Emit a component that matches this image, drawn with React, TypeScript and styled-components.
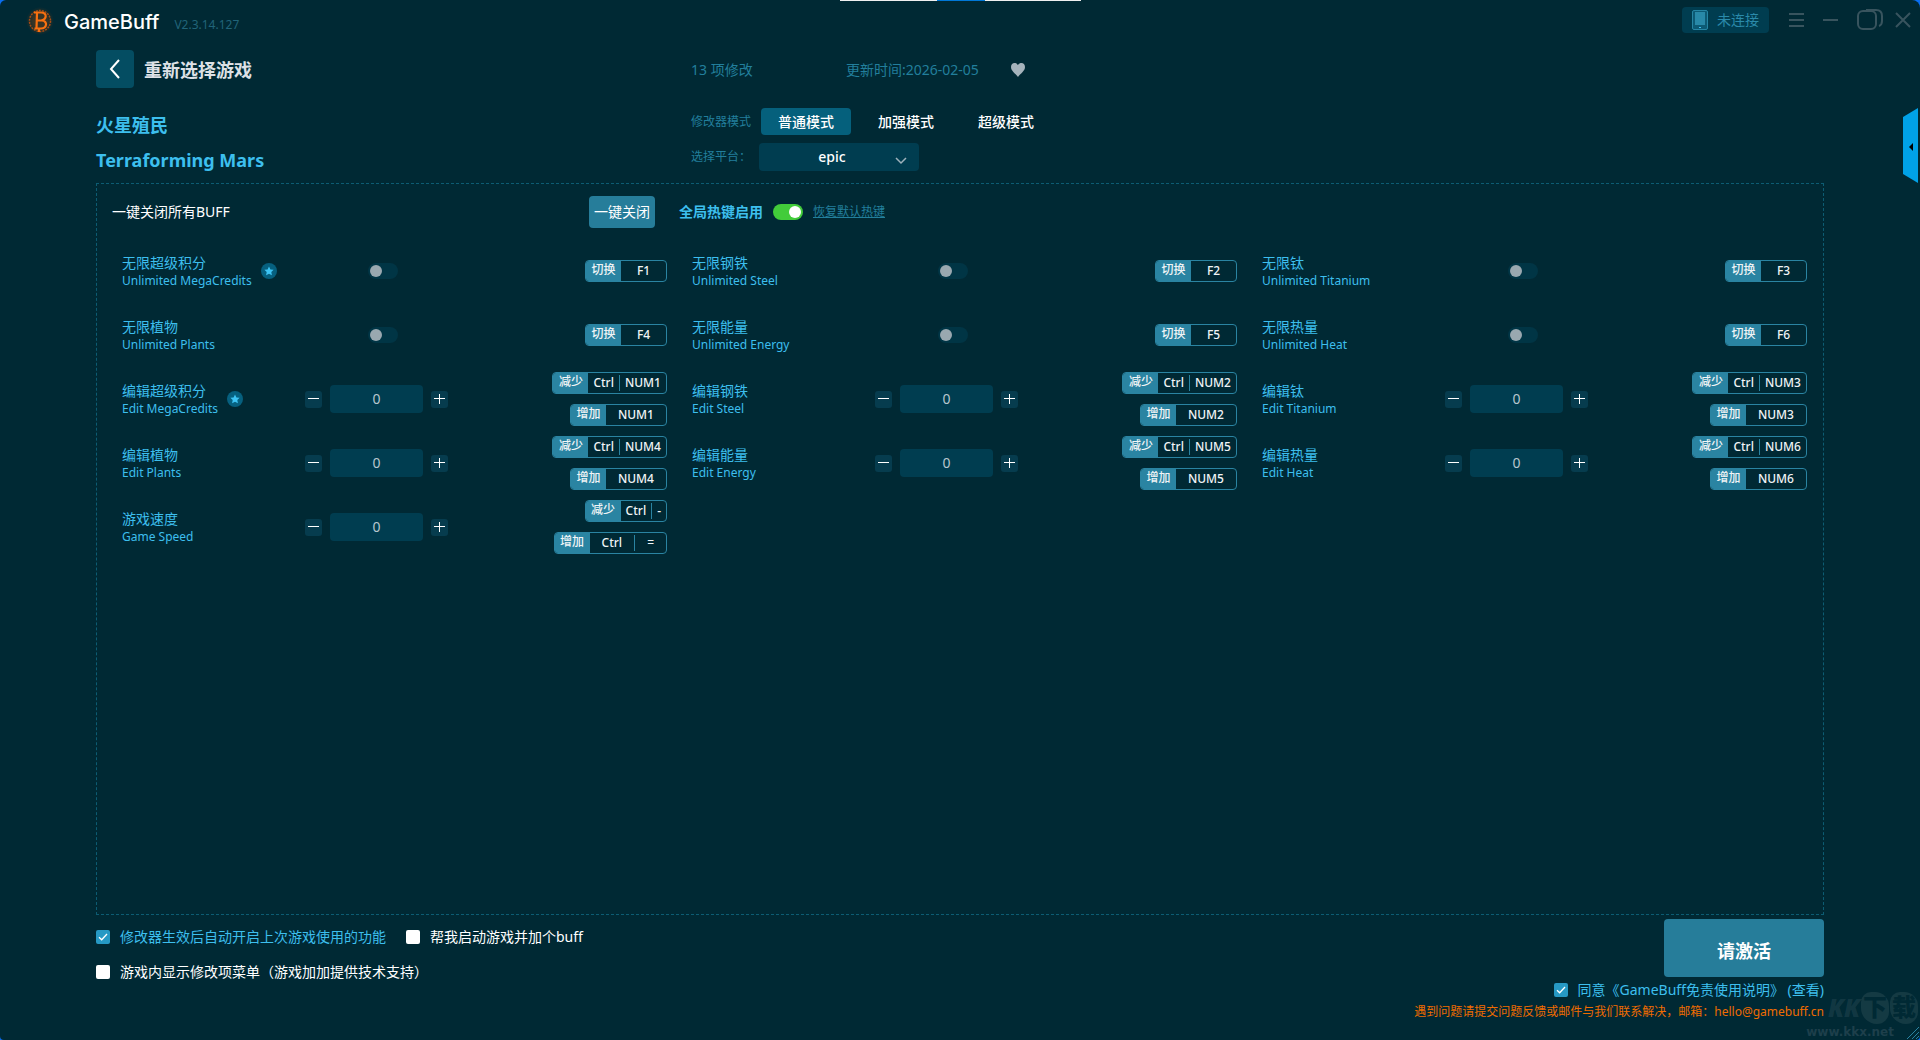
import React, { useState } from "react";
import styled, { createGlobalStyle } from "styled-components";

const GlobalStyle = createGlobalStyle`
  * { box-sizing: border-box; }
  html, body, #root { height: 100%; margin: 0; }
  body { background: #0a6ef0; overflow: hidden; }
  body, button, input, select, output {
    font-family: "Noto Sans", "Noto Sans CJK SC", sans-serif;
  }
  button { border: 0; padding: 0; background: none; cursor: pointer; }
`;

const Window = styled.div`
  position: relative;
  display: flex;
  flex-direction: column;
  height: 100vh;
  background: #002934;
  border-radius: 6px 8px 4px 4px;
  overflow: hidden;
`;

const TopStrip = styled.div`
  position: absolute;
  top: 0;
  left: 50%;
  display: flex;
  width: 241px;
  height: 1px;
  margin-left: -120px;
  background: #f0f0f0;
`;

const StripMark = styled.span`
  width: 48px;
  margin: 0 auto;
  background: #0078d7;
`;

const TitleBar = styled.header`
  display: flex;
  align-items: center;
  height: 40px;
  padding: 0 9px 0 26px;
`;

const Brand = styled.div`
  margin-left: 10px;
  padding-top: 3px;
  color: #ffffff;
  font: 500 20px/28px Inter, sans-serif;
`;

const Version = styled.div`
  margin-left: 15px;
  padding-top: 9px;
  color: #216479;
  font-size: 12px;
  line-height: 16px;
`;

const WindowTools = styled.div`
  display: flex;
  align-items: center;
  gap: 12px;
  margin-left: auto;
`;

const ConnectButton = styled.button`
  display: flex;
  align-items: center;
  gap: 9px;
  height: 26px;
  margin-right: 8px;
  padding: 0 10px;
  border-radius: 4px;
  background: #003d50;
  color: #2a8aaa;
  font-size: 14px;
  line-height: 20px;
`;

const WindowButton = styled.button<{ $spaced?: boolean }>`
  display: flex;
  margin-right: ${(p) => (p.$spaced ? 7 : 0)}px;
  color: #38545e;
`;

const Main = styled.main`
  display: flex;
  flex: 1;
  flex-direction: column;
  min-height: 0;
  padding: 0 96px;
`;

const Heading = styled.section`
  display: grid;
  grid-template-columns: 595px 1fr;
  height: 143px;
`;

const Stack = styled.div`
  display: flex;
  flex-direction: column;
`;

const BackRow = styled.div`
  display: flex;
  align-items: center;
  gap: 10px;
  height: 38px;
  margin: 10px 0 20px;
`;

const BackButton = styled.button`
  display: grid;
  place-items: center;
  width: 38px;
  height: 38px;
  border-radius: 4px;
  background: #044d62;
  color: #ffffff;
`;

const PageTitle = styled.h1`
  margin: 0;
  padding-top: 2px;
  color: #dde1e6;
  font-size: 18px;
  line-height: 28px;
`;

const GameName = styled.h2`
  margin: 0;
  color: #3dbfee;
  font-size: 18px;
  line-height: 35px;
`;

const InfoRow = styled.div`
  display: flex;
  align-items: center;
  height: 38px;
  margin: 10px 0 20px;
  padding-top: 2px;
  color: #227f9c;
  font-size: 14px;
  line-height: 20px;
`;

const ChangeCount = styled.span`
  width: 155px;
`;

const LikeButton = styled.button`
  display: flex;
  margin-left: 31px;
`;

const ModeRow = styled.div`
  display: flex;
  align-items: center;
  gap: 10px;
  height: 27px;
  margin-bottom: 8px;
`;

const FieldLabel = styled.label`
  width: 60px;
  color: #227f9c;
  font-size: 12px;
  line-height: 18px;
`;

const Mode = styled.button<{ $active: boolean }>`
  width: 90px;
  height: 27px;
  border-radius: 4px;
  background: ${(p) => (p.$active ? "#05607c" : "transparent")};
  color: #ffffff;
  font-size: 14px;
  font-weight: 500;
  line-height: 20px;
`;

const PlatformRow = styled.div`
  display: flex;
  align-items: center;
  gap: 8px;
`;

const SelectBox = styled.div`
  position: relative;
  display: flex;
`;

const Select = styled.select`
  width: 160px;
  height: 28px;
  padding: 0 28px 2px 14px;
  border: 0;
  border-radius: 4px;
  appearance: none;
  background: #003d50;
  color: #ffffff;
  font-size: 14px;
  font-weight: 500;
  text-align: center;
  text-align-last: center;
`;

const SelectArrow = styled.svg`
  position: absolute;
  top: 14px;
  right: 12px;
  pointer-events: none;
`;

const Panel = styled.section`
  display: flex;
  flex: 1;
  flex-direction: column;
  padding: 12px 16px 0 15px;
  border: 1px dashed #0c5c73;
`;

const PanelBar = styled.div`
  display: flex;
  align-items: center;
  height: 32px;
  margin-bottom: 11px;
  font-size: 14px;
  line-height: 20px;
`;

const BarTitle = styled.span`
  width: 477px;
  color: #ffffff;
`;

const CloseAll = styled.button`
  width: 66px;
  height: 32px;
  margin-right: 24px;
  border-radius: 4px;
  background: #267d9a;
  color: #ffffff;
  font-size: 14px;
  line-height: 20px;
`;

const HotkeyLabel = styled.label`
  margin-right: 10px;
  color: #3dbfee;
  font-weight: 700;
`;

const Switch = styled.input`
  display: flex;
  align-items: center;
  width: 30px;
  height: 16px;
  margin: 0;
  padding: 0 2px;
  border-radius: 8px;
  appearance: none;
  background: #003545;
  cursor: pointer;

  &::before {
    content: "";
    width: 12px;
    height: 12px;
    border-radius: 50%;
    background: #99a8b0;
  }
  &:checked {
    justify-content: flex-end;
    background: #42cc3a;
  }
  &:checked::before { background: #ffffff; }
`;

const ResetLink = styled.a`
  margin-left: 10px;
  color: #227f9c;
  font-size: 12px;
  line-height: 18px;
`;

const Grid = styled.div`
  display: grid;
  grid-template-columns: repeat(3, 1fr);
  column-gap: 25px;
  padding-left: 10px;
`;

const Item = styled.div`
  display: grid;
  grid-template-columns: 183px 156px 1fr;
  align-items: center;
  height: 64px;
`;

const NameCell = styled.div`
  display: flex;
  align-items: center;
  gap: 9px;
`;

const Name = styled.div`
  padding-top: 2px;
  color: #3dbfee;
  font-size: 14px;
  line-height: 18px;
  white-space: nowrap;
`;

const EnglishName = styled.div`
  font-size: 12px;
`;

const SwitchCell = styled.div`
  display: flex;
  justify-content: center;
`;

const Stepper = styled.div`
  display: flex;
  align-items: center;
  gap: 8px;
`;

const StepButton = styled.button`
  display: grid;
  place-items: center;
  width: 17px;
  height: 17px;
  border-radius: 3px;
  background: #063c4e;
  color: #ffffff;
`;

const Value = styled.input`
  width: 93px;
  height: 28px;
  padding: 0 0 1px;
  border: 0;
  border-radius: 4px;
  background: #003d50;
  color: #b8c6ce;
  font-size: 14px;
  text-align: center;
`;

const HotkeyCell = styled.div`
  display: flex;
  flex-direction: column;
  align-items: flex-end;
  gap: 10px;
`;

const Hotkey = styled.button`
  display: flex;
  height: 22px;
  border: 1px solid #2a84a2;
  border-radius: 4px;
  overflow: hidden;
  color: #f0f4f6;
  font-size: 12px;
  font-weight: 500;
  line-height: 20px;
`;

const Action = styled.span`
  width: 35px;
  background: #2a84a2;
  line-height: 18px;
`;

const Keys = styled.span<{ $tight: boolean }>`
  display: flex;
  align-items: center;
  min-width: 45px;

  & > span {
    flex: 1 0 auto;
    padding: 0 ${(p) => (p.$tight ? 5 : 12)}px;
    line-height: 16px;
  }
  & > span + span { border-left: 1px solid #2a84a2; }
`;

const Footer = styled.footer`
  display: flex;
  justify-content: space-between;
  height: 125px;
`;

const Options = styled.div`
  display: flex;
  flex-direction: column;
  gap: 15px;
  padding-top: 12px;
`;

const OptionRow = styled.div`
  display: flex;
  gap: 20px;
`;

const Option = styled.label<{ $on: boolean }>`
  display: flex;
  align-items: center;
  gap: 10px;
  color: ${(p) => (p.$on ? "#3dbfee" : "#ffffff")};
  font-size: 14px;
  line-height: 20px;
  white-space: nowrap;
`;

const TickBox = styled.span`
  position: relative;
  display: flex;

  & > input {
    width: 14px;
    height: 14px;
    margin: 0;
    border-radius: 2px;
    appearance: none;
    background: #ffffff;
  }
  & > input:checked { background: #2699c4; }
  & > svg { position: absolute; inset: 0; pointer-events: none; }
`;

const Activation = styled.div`
  display: flex;
  flex-direction: column;
  align-items: flex-end;
  padding-top: 4px;
`;

const ActivateButton = styled.button`
  width: 160px;
  height: 58px;
  margin-bottom: 3px;
  padding-top: 4px;
  border-radius: 4px;
  background: #267d9a;
  color: #ffffff;
  font-size: 18px;
  font-weight: 700;
`;

const Contact = styled.p`
  margin: 3px 0 0;
  color: #f06c00;
  font-size: 12px;
  line-height: 18px;
`;

const SideTab = styled.button`
  position: absolute;
  top: 108px;
  right: 2px;
  display: flex;
`;

const Watermark = styled.div`
  position: absolute;
  right: 2px;
  bottom: 0;
  display: flex;
  flex-direction: column;
  align-items: flex-end;
  pointer-events: none;
`;

const MarkTitle = styled.div`
  display: flex;
  color: rgba(140, 160, 165, 0.14);
  font: italic 900 24px/32px "Noto Sans", "Noto Sans CJK SC", sans-serif;
`;

const MarkSeal = styled.span`
  width: 28px;
  height: 32px;
  margin-left: 1px;
  border-radius: 10px 14px 12px 16px;
  background: rgba(140, 160, 165, 0.14);
  color: #002934;
  font-size: 24px;
  font-style: normal;
  line-height: 30px;
  text-align: center;
`;

const MarkSite = styled.div`
  padding-right: 24px;
  color: #1d3f4b;
  font: 700 12px/16px "DejaVu Sans", sans-serif;
`;

const Grip = styled.svg`
  position: absolute;
  right: 0;
  bottom: 0;
`;

type Binding = { action: string; keys: string[]; tight?: boolean };
type Feature = {
  name: string;
  english: string;
  star?: boolean;
  edit?: boolean;
  bindings: Binding[];
};

const toggle = (name: string, english: string, key: string, star = false): Feature => ({
  name,
  english,
  star,
  bindings: [{ action: "切换", keys: [key] }],
});

const edit = (name: string, english: string, key: string, star = false): Feature => ({
  name,
  english,
  star,
  edit: true,
  bindings: [
    { action: "减少", keys: ["Ctrl", key], tight: true },
    { action: "增加", keys: [key] },
  ],
});

const features: Feature[] = [
  toggle("无限超级积分", "Unlimited MegaCredits", "F1", true),
  toggle("无限钢铁", "Unlimited Steel", "F2"),
  toggle("无限钛", "Unlimited Titanium", "F3"),
  toggle("无限植物", "Unlimited Plants", "F4"),
  toggle("无限能量", "Unlimited Energy", "F5"),
  toggle("无限热量", "Unlimited Heat", "F6"),
  edit("编辑超级积分", "Edit MegaCredits", "NUM1", true),
  edit("编辑钢铁", "Edit Steel", "NUM2"),
  edit("编辑钛", "Edit Titanium", "NUM3"),
  edit("编辑植物", "Edit Plants", "NUM4"),
  edit("编辑能量", "Edit Energy", "NUM5"),
  edit("编辑热量", "Edit Heat", "NUM6"),
  {
    name: "游戏速度",
    english: "Game Speed",
    edit: true,
    bindings: [
      { action: "减少", keys: ["Ctrl", "-"], tight: true },
      { action: "增加", keys: ["Ctrl", "="] },
    ],
  },
];

const Logo = () => (
  <svg width="28" height="32" viewBox="0 0 28 32" fill="none">
    <defs>
      <radialGradient id="glow">
        <stop offset="0.500" stopColor="#c85000" stopOpacity="0.280" />
        <stop offset="1" stopColor="#c85000" stopOpacity="0" />
      </radialGradient>
    </defs>
    <circle cx="14" cy="17" r="14" fill="url(#glow)" />
    <circle cx="14" cy="17" r="10.500" stroke="#a84c14" strokeWidth="1.500" strokeDasharray="2 1" />
    <path d="M8 8.500h7c6.500 0 6 7 0 8M11 9l-.500 15.500M11 16.500h5c6 .500 5 8-1 8H8.500M13 24.500V28" stroke="#f87010" strokeWidth="2.200" />
  </svg>
);

const Star = () => (
  <svg width="16" height="16" viewBox="0 0 16 16" role="img" aria-label="推荐">
    <circle cx="8" cy="8" r="8" fill="#06607f" />
    <path d="M8 3.500l1.400 2.900 3.200.4-2.300 2.200.6 3.200L8 10.700l-2.900 1.500.6-3.200-2.300-2.200 3.200-.4z" fill="#3dc4f4" />
  </svg>
);

const Tick = ({ label, initial = false }: { label: React.ReactNode; initial?: boolean }) => {
  const [on, setOn] = useState(initial);
  return (
    <Option $on={on}>
      <TickBox>
        <input type="checkbox" checked={on} onChange={() => setOn(!on)} />
        {on && (
          <svg width="14" height="14" fill="none" stroke="#fff" strokeWidth="1.300">
            <path d="M3 7.200l2.700 2.600L11 4" />
          </svg>
        )}
      </TickBox>
      {label}
    </Option>
  );
};

const StepperControl = ({ name }: { name: string }) => {
  const [value, setValue] = useState(0);
  return (
    <Stepper>
      <StepButton aria-label={"减少" + name} onClick={() => setValue(value - 1)}>
        <svg width="11" height="11" stroke="currentColor"><path d="M0 4.500h11" /></svg>
      </StepButton>
      <Value
        aria-label={name}
        value={value}
        onChange={(e) => setValue(Number(e.target.value) || 0)}
      />
      <StepButton aria-label={"增加" + name} onClick={() => setValue(value + 1)}>
        <svg width="11" height="11" stroke="currentColor"><path d="M0 4.500h11M5.500 0v10" /></svg>
      </StepButton>
    </Stepper>
  );
};

export default function App() {
  const [mode, setMode] = useState("普通模式");
  return (
    <>
      <GlobalStyle />
      <Window>
        <TopStrip><StripMark /></TopStrip>
        <TitleBar>
          <Logo />
          <Brand>GameBuff</Brand>
          <Version>V2.3.14.127</Version>
          <WindowTools>
            <ConnectButton>
              <svg width="16" height="20" fill="none">
                <rect x="0.500" y="0.500" width="15" height="19" rx="1.500" fill="#0c5a74" stroke="#2685a3" />
                <rect x="3" y="2" width="10" height="13" fill="#2889a8" />
                <rect x="7" y="17" width="2" height="1" fill="#3dbfee" />
              </svg>
              未连接
            </ConnectButton>
            <WindowButton $spaced aria-label="菜单">
              <svg width="15" height="14" fill="currentColor"><path d="M0 0h15v2H0zM0 6h15v2H0zM0 12h15v2H0z" /></svg>
            </WindowButton>
            <WindowButton $spaced aria-label="最小化">
              <svg width="15" height="14" fill="currentColor"><path d="M0 6h15v2H0z" /></svg>
            </WindowButton>
            <WindowButton aria-label="最大化">
              <svg width="26" height="22" fill="none" stroke="currentColor" strokeWidth="2">
                <rect x="1" y="2" width="18" height="18" rx="5" />
                <path d="M9 1h10q6 0 6 6v5q0 4-3 5" />
              </svg>
            </WindowButton>
            <WindowButton aria-label="关闭">
              <svg width="16" height="16" fill="none" stroke="currentColor" strokeWidth="2"><path d="M1 1l14 14M15 1L1 15" /></svg>
            </WindowButton>
          </WindowTools>
        </TitleBar>
        <Main>
          <Heading>
            <Stack>
              <BackRow>
                <BackButton aria-label="返回">
                  <svg width="12" height="20" fill="none" stroke="currentColor" strokeWidth="2"><path d="M10 1L2 10l8 9" /></svg>
                </BackButton>
                <PageTitle>重新选择游戏</PageTitle>
              </BackRow>
              <GameName>火星殖民</GameName>
              <GameName>Terraforming Mars</GameName>
            </Stack>
            <Stack>
              <InfoRow>
                <ChangeCount>13 项修改</ChangeCount>
                <span>更新时间:2026-02-05</span>
                <LikeButton aria-label="收藏">
                  <svg width="16" height="14" viewBox="0 0 16 14" fill="#a5b3bc"><path d="M8 2C6-1 1-.5 1 4c0 4 4 6 7 10 3-4 7-6 7-10 0-4.500-5-5-7-2z" /></svg>
                </LikeButton>
              </InfoRow>
              <ModeRow>
                <FieldLabel as="span">修改器模式</FieldLabel>
                {["普通模式", "加强模式", "超级模式"].map((m) => (
                  <Mode key={m} $active={m === mode} onClick={() => setMode(m)}>{m}</Mode>
                ))}
              </ModeRow>
              <PlatformRow>
                <FieldLabel htmlFor="platform">选择平台：</FieldLabel>
                <SelectBox>
                  <Select id="platform"><option>epic</option></Select>
                  <SelectArrow width="12" height="8" fill="none" stroke="#9fb2bb" strokeWidth="1.500">
                    <path d="M1 1l5 5 5-5" />
                  </SelectArrow>
                </SelectBox>
              </PlatformRow>
            </Stack>
          </Heading>
          <Panel>
            <PanelBar>
              <BarTitle>一键关闭所有BUFF</BarTitle>
              <CloseAll>一键关闭</CloseAll>
              <HotkeyLabel htmlFor="hotkeys">全局热键启用</HotkeyLabel>
              <Switch id="hotkeys" type="checkbox" defaultChecked />
              <ResetLink href="#reset">恢复默认热键</ResetLink>
            </PanelBar>
            <Grid>
              {features.map((f) => (
                <Item key={f.name}>
                  <NameCell>
                    <Name>
                      {f.name}
                      <EnglishName>{f.english}</EnglishName>
                    </Name>
                    {f.star && <Star />}
                  </NameCell>
                  {f.edit ? (
                    <StepperControl name={f.name} />
                  ) : (
                    <SwitchCell><Switch type="checkbox" aria-label={f.name} /></SwitchCell>
                  )}
                  <HotkeyCell>
                    {f.bindings.map((b) => (
                      <Hotkey key={b.action}>
                        <Action>{b.action}</Action>
                        <Keys $tight={!!b.tight}>
                          {b.keys.map((k) => <span key={k}>{k}</span>)}
                        </Keys>
                      </Hotkey>
                    ))}
                  </HotkeyCell>
                </Item>
              ))}
            </Grid>
          </Panel>
          <Footer>
            <Options>
              <OptionRow>
                <Tick initial label="修改器生效后自动开启上次游戏使用的功能" />
                <Tick label="帮我启动游戏并加个buff" />
              </OptionRow>
              <Tick label="游戏内显示修改项菜单（游戏加加提供技术支持）" />
            </Options>
            <Activation>
              <ActivateButton>请激活</ActivateButton>
              <Tick initial label="同意《GameBuff免责使用说明》 (查看)" />
              <Contact>遇到问题请提交问题反馈或邮件与我们联系解决，邮箱：hello@gamebuff.cn</Contact>
            </Activation>
          </Footer>
        </Main>
        <SideTab aria-label="展开侧栏">
          <svg width="15" height="75"><path d="M0 9L15 0v75L0 66z" fill="#00a2e8" /><path d="M6 39l4-4v8z" fill="#000" /></svg>
        </SideTab>
        <Watermark>
          <MarkTitle>KK<MarkSeal>下</MarkSeal><MarkSeal>载</MarkSeal></MarkTitle>
          <MarkSite>www.kkx.net</MarkSite>
        </Watermark>
        <Grip width="14" height="14" stroke="#2a84a2" fill="none"><path d="M1 13L13 1M6 13l7-7M10 13l3-3" /></Grip>
      </Window>
    </>
  );
}
